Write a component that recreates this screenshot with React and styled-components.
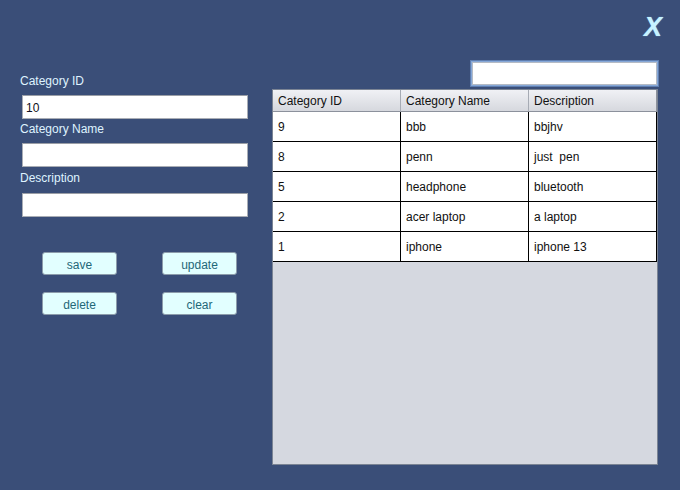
import React from "react";
import styled, { createGlobalStyle } from "styled-components";

const Global = createGlobalStyle`
  html, body { margin: 0; padding: 0; background: #3a4e78; }
  body { font-family: "Liberation Sans", Arial, sans-serif; font-size: 12px; }
  * { box-sizing: border-box; }
`;

const Page = styled.div`
  width: 680px;
  height: 490px;
  background: #3a4e78;
  display: flex;
  flex-direction: column;
`;

const TopBar = styled.div`
  height: 60px;
  display: flex;
  justify-content: flex-end;
  align-items: flex-start;
  padding: 12px 18px 0 0;
`;

const CloseX = styled.span`
  font-family: "Liberation Sans", Arial, sans-serif;
  font-weight: bold;
  font-style: italic;
  font-size: 27px;
  line-height: 30px;
  color: #c6f2ff;
  cursor: pointer;
  text-shadow: 0 0 1px #8fc8ee;
`;

const Main = styled.div`
  display: flex;
  align-items: flex-start;
  padding-left: 20px;
`;

const Form = styled.div`
  width: 228px;
  margin-top: 14px;
  display: flex;
  flex-direction: column;
`;

const Label = styled.div`
  color: #dff3ff;
  font-size: 12px;
  line-height: 15px;
  margin-bottom: ${(p) => p.$gap}px;
`;

const Field = styled.input`
  width: 226px;
  height: 24px;
  margin-left: 2px;
  margin-bottom: ${(p) => p.$after}px;
  border: 1px solid #a9adb5;
  border-top-color: #9a9ea6;
  background: #fff;
  font-family: "Liberation Sans", Arial, sans-serif;
  font-size: 12px;
  color: #101020;
  padding: 1px 3px 0;
  outline: none;
`;

const ButtonGrid = styled.div`
  display: grid;
  grid-template-columns: 75px 75px;
  column-gap: 45px;
  row-gap: 17px;
  margin-top: 35px;
  margin-left: 22px;
`;

const Button = styled.button`
  height: 23px;
  border: 1px solid #8c9cab;
  border-radius: 3px;
  background: #e2ffff;
  color: #1f6878;
  font-family: "Liberation Sans", Arial, sans-serif;
  font-size: 12px;
  padding: 2px 0 0;
  cursor: pointer;
`;

const Right = styled.div`
  margin-left: 24px;
  width: 387px;
  display: flex;
  flex-direction: column;
  align-items: flex-end;
`;

const Search = styled.input`
  width: 189px;
  height: 27px;
  border: 2px solid #86a8d8;
  box-shadow: inset 0 0 0 1px #b4bac4;
  outline: 1px solid #5f7eb0;
  outline-offset: -1px;
  background: #fff;
  font-family: "Liberation Sans", Arial, sans-serif;
  font-size: 12px;
  padding: 0 4px;
`;

const TablePanel = styled.div`
  align-self: flex-start;
  margin-top: 2px;
  width: 386px;
  height: 376px;
  border: 1px solid #7b8494;
  background: #d5d8e0;
`;

const Grid = styled.div`
  display: grid;
  grid-template-columns: 128px 128px 128px;
`;

const HeadCell = styled.div`
  height: 22px;
  padding: 1px 0 0 5px;
  display: flex;
  align-items: center;
  color: #111;
  font-size: 12px;
  background: linear-gradient(#f0f1f5, #d6d8de);
  border-bottom: 1px solid #8c919c;
  border-right: 1px solid ${(p) => (p.$last ? "#8c919c" : "#a6abb4")};
`;

const Cell = styled.div`
  height: 30px;
  padding: 1px 0 0 5px;
  display: flex;
  align-items: center;
  white-space: pre;
  color: #111;
  font-size: 12px;
  background: #fff;
  border-bottom: 1px solid #000;
  border-right: 1px solid #000;
`;

const rows = [
  ["9", "bbb", "bbjhv"],
  ["8", "penn", "just  pen"],
  ["5", "headphone", "bluetooth"],
  ["2", "acer laptop", "a laptop"],
  ["1", "iphone", "iphone 13"],
];

export default function App() {
  return (
    <>
      <Global />
      <Page>
        <TopBar>
          <CloseX>X</CloseX>
        </TopBar>
        <Main>
          <Form>
            <Label $gap={6}>Category ID</Label>
            <Field $after={3} defaultValue="10" />
            <Label $gap={6}>Category Name</Label>
            <Field $after={4} defaultValue="" />
            <Label $gap={7}>Description</Label>
            <Field $after={0} defaultValue="" />
            <ButtonGrid>
              <Button>save</Button>
              <Button>update</Button>
              <Button>delete</Button>
              <Button>clear</Button>
            </ButtonGrid>
          </Form>
          <Right>
            <Search />
            <TablePanel>
              <Grid>
                <HeadCell>Category ID</HeadCell>
                <HeadCell>Category Name</HeadCell>
                <HeadCell $last>Description</HeadCell>
                {rows.map((r) =>
                  r.map((c, i) => <Cell key={r[0] + "-" + i}>{c}</Cell>)
                )}
              </Grid>
            </TablePanel>
          </Right>
        </Main>
      </Page>
    </>
  );
}
